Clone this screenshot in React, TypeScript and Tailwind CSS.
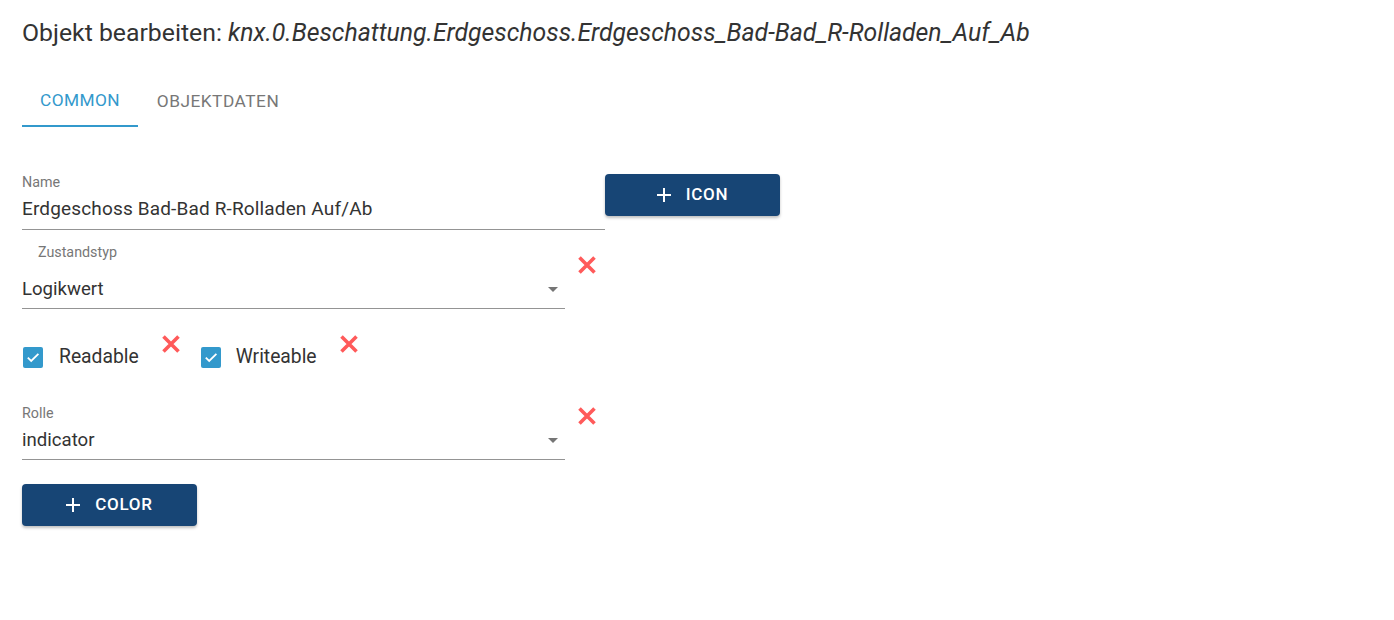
import React from "react";

function RedX({ className = "" }: { className?: string }) {
  return (
    <svg width="20" height="20" viewBox="0 0 20 20" className={`shrink-0 ${className}`}>
      <path d="M2.5 2.5 L17.5 17.5 M17.5 2.5 L2.5 17.5" stroke="#ff5a5a" strokeWidth="3.6" strokeLinecap="butt" fill="none" />
    </svg>
  );
}

function Arrow() {
  return (
    <svg width="24" height="24" viewBox="0 0 24 24" className="shrink-0">
      <path d="M7 10l5 5 5-5z" fill="#757575" />
    </svg>
  );
}

function Plus() {
  return (
    <svg width="24" height="24" viewBox="0 0 24 24" className="shrink-0 -mx-[5px]">
      <path d="M19 13h-6v6h-2v-6H5v-2h6V5h2v6h6v2z" fill="#ffffff" />
    </svg>
  );
}

function Check() {
  return (
    <svg width="24" height="24" viewBox="0 0 24 24" className="shrink-0">
      <rect x="2" y="2" width="20" height="21" rx="2" fill="#3399cc" />
      <path d="M6.8 12.6l3.4 3.4 7.2-7.2" stroke="#fff" strokeWidth="1.8" fill="none" />
    </svg>
  );
}

function Btn({ label }: { label: string }) {
  return (
    <button className="flex h-[42px] w-[175px] items-center justify-center gap-[15px] rounded-[4px] bg-[#174575] text-[17px] font-medium tracking-[0.7px] text-white shadow-[0_2px_3px_rgba(0,0,0,0.25)]">
      <Plus />
      <span>{label}</span>
    </button>
  );
}

export default function App() {
  return (
    <div className="min-h-[620px] bg-white px-[22px] font-['Roboto',sans-serif] text-[#333]">
      <h1 className="pt-[18px] text-[24.8px] font-normal leading-[30px] text-[#333]">
        Objekt bearbeiten: <i>knx.0.Beschattung.Erdgeschoss.Erdgeschoss_Bad-Bad_R-Rolladen_Auf_Ab</i>
      </h1>

      <div className="mt-[29px] flex">
        <div className="flex h-[50px] w-[116px] items-center justify-center border-b-2 border-[#3399cc] text-[17.3px] uppercase tracking-[0.4px] text-[#3399cc]">
          Common
        </div>
        <div className="flex h-[50px] w-[160px] items-center justify-center text-[17.3px] uppercase tracking-[0.5px] text-[#777]">
          Objektdaten
        </div>
      </div>

      <div className="mt-[47px] flex items-start">
        <div className="w-[583px]">
          <div className="text-[14.3px] leading-[16px] text-[#777]">Name</div>
          <div className="mt-[7px] border-b border-[#949494] pb-[8px] text-[19px] leading-[24px] tracking-[0.15px] text-[#333]">
            Erdgeschoss Bad-Bad R-Rolladen Auf/Ab
          </div>
        </div>
        <Btn label="ICON" />
      </div>

      <div className="mt-[14px] flex items-start">
        <div className="w-[543px]">
          <div className="pl-[16px] text-[14.3px] leading-[16px] text-[#777]">Zustandstyp</div>
          <div className="mt-[17px] flex items-center justify-between border-b border-[#949494] pb-[7px] text-[18.6px] leading-[24px]">
            <span>Logikwert</span>
            <Arrow />
          </div>
        </div>
        <RedX className="ml-[12px] mt-[11px]" />
      </div>

      <div className="mt-[25px] flex items-start">
        <div className="mt-[11px] flex h-[24px] items-center">
          <span className="-ml-[1px]"><Check /></span>
          <span className="ml-[14px] text-[19.3px] leading-[24px]">Readable</span>
        </div>
        <RedX className="ml-[22px]" />
        <div className="ml-[18px] mt-[11px] flex h-[24px] items-center">
          <Check />
          <span className="ml-[13px] text-[19.3px] leading-[24px]">Writeable</span>
        </div>
        <RedX className="ml-[22px]" />
      </div>

      <div className="mt-[36px] flex items-start">
        <div className="w-[543px]">
          <div className="text-[14.3px] leading-[16px] text-[#777]">Rolle</div>
          <div className="mt-[7px] flex items-center justify-between border-b border-[#949494] pb-[7px] text-[18.6px] leading-[24px]">
            <span>indicator</span>
            <Arrow />
          </div>
        </div>
        <RedX className="ml-[12px] mt-[1px]" />
      </div>

      <div className="mt-[24px]">
        <Btn label="COLOR" />
      </div>
    </div>
  );
}
